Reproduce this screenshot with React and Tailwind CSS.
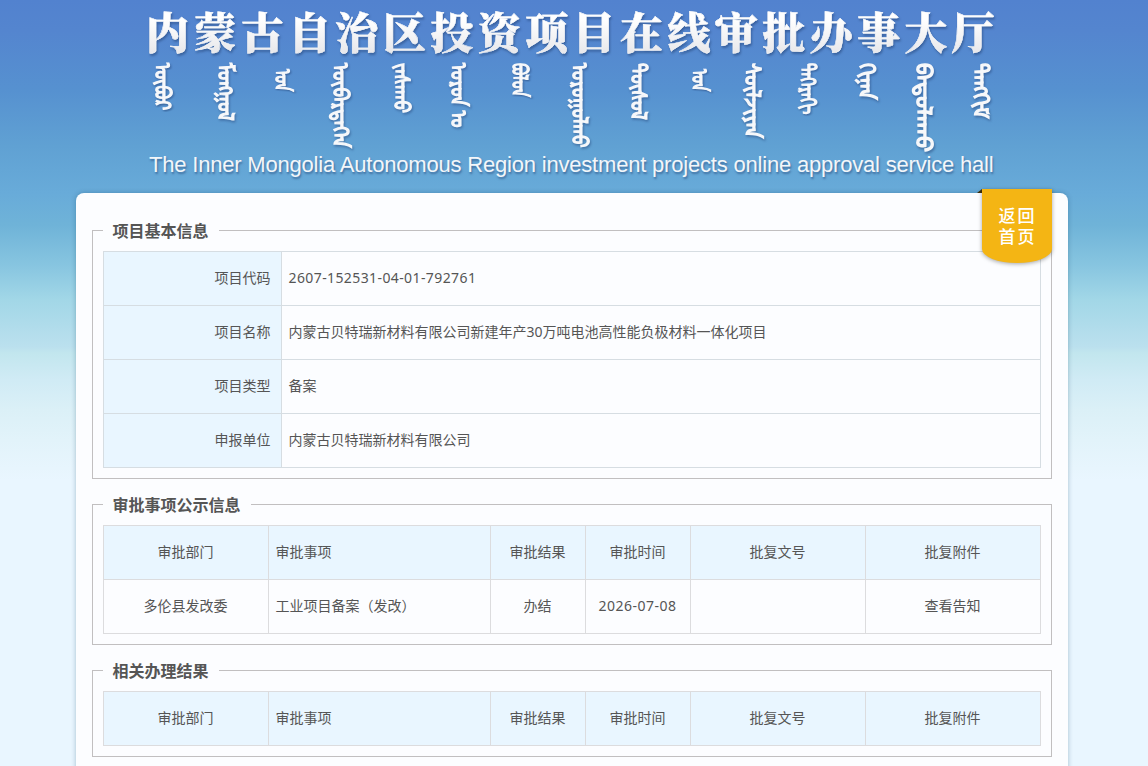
import React from "react";

// scale squeezes each word to the length it has on the banner
const words = [
  { text: "ᠥᠪᠥᠷ", left: 156, top: 63, scale: 0.78 },
  { text: "ᠮᠣᠩᠭᠣᠯ", left: 219, top: 63, scale: 0.83 },
  { text: "ᠤᠨ", left: 276, top: 69, scale: 0.68 },
  { text: "ᠥᠪᠡᠷᠲᠡᠭᠡᠨ", left: 334, top: 63, scale: 0.85 },
  { text: "ᠵᠠᠰᠠᠬᠤ", left: 395, top: 63, scale: 0.82 },
  { text: "ᠣᠷᠣᠨ ᠤ", left: 452, top: 63, scale: 0.81 },
  { text: "ᠪᠣᠯᠤᠨ", left: 513, top: 63, scale: 0.7 },
  { text: "ᠣᠷᠣᠭᠤᠯᠬᠤ", left: 573, top: 63, scale: 0.83 },
  { text: "ᠲᠥᠰᠦᠯ", left: 632, top: 63, scale: 0.84 },
  { text: "ᠤᠨ", left: 693, top: 69, scale: 0.68 },
  { text: "ᠰᠦᠯᠵᠢᠶᠡᠨ", left: 746, top: 63, scale: 0.9 },
  { text: "ᠳᠡᠭᠡᠷᠡᠬᠢ", left: 801, top: 63, scale: 0.71 },
  { text: "ᠬᠢᠨᠠᠨ", left: 860, top: 63, scale: 0.92 },
  { text: "ᠪᠠᠲᠤᠯᠠᠬᠤ", left: 917, top: 63, scale: 1.06 },
  { text: "ᠲᠠᠩᠬᠢᠮ", left: 974, top: 63, scale: 0.92 },
];

const info = [
  { label: "项目代码", value: "2607-152531-04-01-792761", numeric: true },
  { label: "项目名称", value: "内蒙古贝特瑞新材料有限公司新建年产30万吨电池高性能负极材料一体化项目" },
  { label: "项目类型", value: "备案" },
  { label: "申报单位", value: "内蒙古贝特瑞新材料有限公司" },
];

const columns = ["审批部门", "审批事项", "审批结果", "审批时间", "批复文号", "批复附件"];

const approvals = [["多伦县发改委", "工业项目备案（发改）", "办结", "2026-07-08", "", "查看告知"]];

function Section({ title, children }) {
  return (
    <fieldset className="border border-[#c1bfc0] px-2.5 pb-2.5 pt-2.5 mb-[15px] min-w-0">
      <legend className="pl-[9.5px] pr-[10.5px] h-[21px] leading-[23px] text-base font-bold text-[#555]">{title}</legend>
      {children}
    </fieldset>
  );
}

function ResultTable({ rows }) {
  return (
    <table className="w-[938px] table-fixed border-collapse text-center">
      <colgroup>
        <col className="w-[165px]" />
        <col className="w-[222px]" />
        <col className="w-[95px]" />
        <col className="w-[105px]" />
        <col className="w-[175px]" />
        <col className="w-[175px]" />
      </colgroup>
      <thead>
        <tr className="h-[54px] bg-[#e9f6ff]">
          {columns.map((name, i) => (
            <th
              key={name}
              className={`border border-[#dcdcde] pb-0.5 font-normal ${i === 1 ? "text-left pl-[6.5px]" : "pr-px"}`}
            >
              {name}
            </th>
          ))}
        </tr>
      </thead>
      <tbody>
        {rows.map((row, r) => (
          <tr key={r} className="h-[54px]">
            {row.map((cell, i) => (
              <td
                key={i}
                className={`border border-[#dcdcde] pb-0.5 ${i === 1 ? "text-left pl-[6.5px]" : "pr-px"} ${
                  i === 3 ? "tracking-[0.5px]" : ""
                }`}
              >
                {cell}
              </td>
            ))}
          </tr>
        ))}
      </tbody>
    </table>
  );
}

function Banner() {
  return (
    <header className="relative h-[193px]">
      <h1 className="absolute left-[146px] top-0 h-[64px] leading-[62px] whitespace-nowrap text-[43px] font-black tracking-[4.4px] font-['Noto_Serif_CJK_SC','Noto_Sans_CJK_SC',serif] text-transparent bg-clip-text bg-linear-to-b from-white from-30% to-[#e9e9ec] to-80% [-webkit-text-stroke:0.4px_#f6f7f9] drop-shadow-[1px_2px_1px_rgba(30,60,110,0.5)]">
        内蒙古自治区投资项目在线审批办事大厅
      </h1>
      {words.map((word, i) => (
        <span
          key={i}
          className="absolute w-6 leading-6 origin-top text-[22px] whitespace-nowrap text-[#f7f8fa] [writing-mode:vertical-lr] font-['Noto_Sans_Mongolian','Mongolian_Baiti',sans-serif] [-webkit-text-stroke:1.5px_#f7f8fa] drop-shadow-[1px_2px_1px_rgba(30,60,110,0.45)]"
          style={{ left: word.left, top: word.top, transform: `scaleY(${word.scale})` }}
        >
          {word.text}
        </span>
      ))}
      <p className="absolute left-[149px] top-[150px] leading-[30px] whitespace-nowrap text-[22px] tracking-[-0.195px] text-[#f3f6f9] font-['Liberation_Sans',Arial,sans-serif] [text-shadow:1px_2px_2px_rgba(30,60,110,0.5)]">
        The Inner Mongolia Autonomous Region investment projects online approval service hall
      </p>
    </header>
  );
}

export default function App() {
  return (
    <div className="h-[766px] overflow-hidden bg-[#e9f6ff] bg-[linear-gradient(to_bottom,#5282cf_0px,#5485cf_30px,#5691d0_90px,#60a1d3_146px,#68abd9_193px,#6fb3d8_225px,#87c5e0_265px,#a2d7e7_300px,#bbe0ee_347px,#c2e6ee_353px,#d0ebf5_380px,#dbf0f7_410px,#e2f3fa_440px,#e7f5fd_468px,#e9f6ff_480px)] text-sm text-[#555] font-['Noto_Sans','Noto_Sans_CJK_SC',sans-serif]">
      <Banner />
      <main className="relative ml-[76px] w-[992px] h-[620px] px-4 pt-[27px] rounded-t-lg bg-[#fcfdff] shadow-[0_0_5px_rgba(0,60,90,0.3)]">
        <Section title="项目基本信息">
          <table className="w-[938px] table-fixed border-collapse">
            <colgroup>
              <col className="w-[178px]" />
              <col />
            </colgroup>
            <tbody>
              {info.map((item) => (
                <tr key={item.label} className="h-[54px]">
                  <th className="border border-[#d6dde2] bg-[#e9f6ff] pb-0.5 pr-[10.5px] text-right font-normal">
                    {item.label}
                  </th>
                  <td className={`border border-[#d6dde2] pb-0.5 pl-[6.5px] ${item.numeric ? "tracking-[0.4px]" : ""}`}>
                    {item.value}
                  </td>
                </tr>
              ))}
            </tbody>
          </table>
        </Section>
        <Section title="审批事项公示信息">
          <ResultTable rows={approvals} />
        </Section>
        <Section title="相关办理结果">
          <ResultTable rows={[]} />
        </Section>

        <span className="absolute -top-1 left-[901px] size-0 border-b-4 border-b-[#3f2f08] border-l-[5px] border-l-transparent"></span>
        <a
          href="#"
          className="absolute -top-1 left-[906px] w-[70px] h-[74px] pl-px pt-4 rounded-b-[35px_14px] bg-[#f4b514] text-center text-[17px] leading-[21px] tracking-[2px] font-medium text-white shadow-[0_1px_4px_rgba(0,0,0,0.35)]"
        >
          返回
          <br />
          首页
        </a>
      </main>
    </div>
  );
}
